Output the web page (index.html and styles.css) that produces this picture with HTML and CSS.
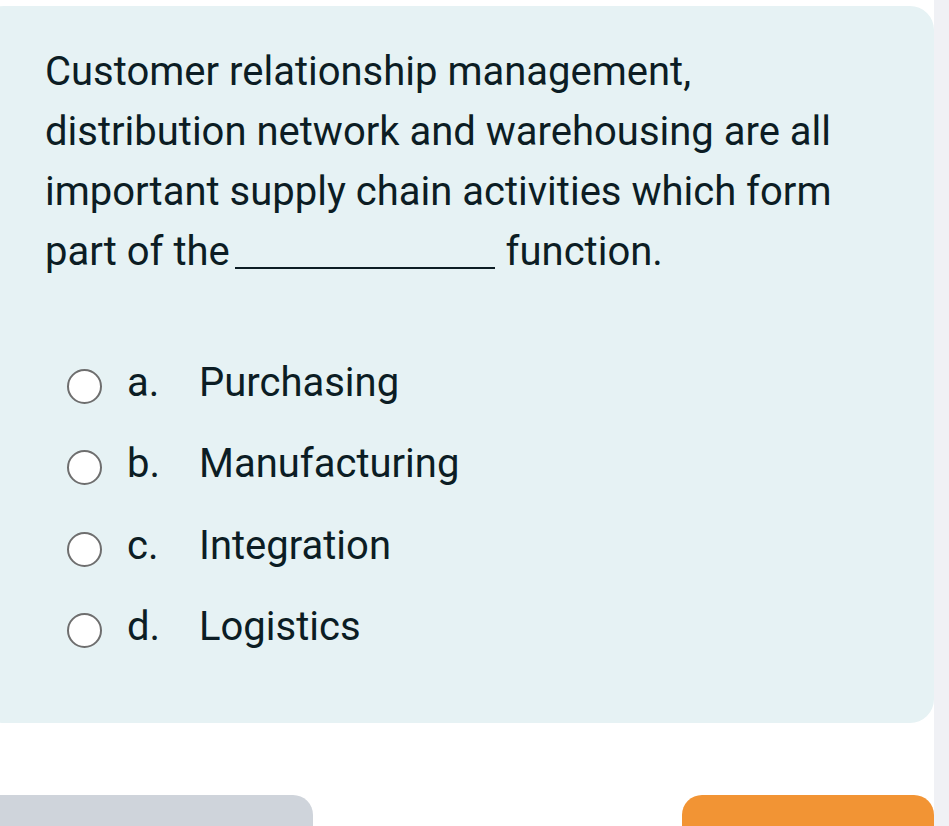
FILE: index.html
```html
<!DOCTYPE html>
<html>
<head>
<meta charset="utf-8">
<link rel="stylesheet" href="styles.css">
</head>
<body>
<div class="page">
  <main class="main">
    <section class="card">
      <p class="question">Customer relationship management, distribution network and warehousing are all important supply chain activities which form part of the <span class="blank"></span> function.</p>
      <ul class="options">
        <li class="option"><span class="radio"></span><span class="letter">a.</span><span class="label">Purchasing</span></li>
        <li class="option"><span class="radio"></span><span class="letter">b.</span><span class="label">Manufacturing</span></li>
        <li class="option"><span class="radio"></span><span class="letter">c.</span><span class="label">Integration</span></li>
        <li class="option"><span class="radio"></span><span class="letter">d.</span><span class="label">Logistics</span></li>
      </ul>
    </section>
    <div class="actions">
      <button class="btn btn-secondary"></button>
      <button class="btn btn-primary"></button>
    </div>
  </main>
  <div class="track"></div>
</div>
</body>
</html>
```
FILE: styles.css
```css
html, body {
  margin: 0;
  padding: 0;
  background: #ffffff;
  overflow: hidden;
}
body {
  font-family: Roboto, "Liberation Sans", sans-serif;
  color: #0c1d24;
}
.page {
  display: flex;
  height: 826px;
}
.main {
  width: 934px;
  flex: none;
  display: flex;
  flex-direction: column;
}
.track {
  flex: 1;
  background: #f0f1f5;
}
.card {
  flex: none;
  margin: 6px 0 0 -20px;
  width: 954px;
  height: 717px;
  box-sizing: border-box;
  background: #e6f2f4;
  border-radius: 24px;
  padding: 36px 40px 0 65px;
}
.question {
  margin: 0;
  font-size: 40px;
  line-height: 60px;
  width: 820px;
}
.blank {
  display: inline-block;
  width: 260px;
  height: 1px;
  border-bottom: 2.5px solid #0c1d24;
  margin: 0 1px -4px -5px;
}
.options {
  list-style: none;
  margin: 70px 0 0 22px;
  padding: 0;
  display: flex;
  flex-direction: column;
  gap: 21.5px;
}
.option {
  display: flex;
  align-items: center;
  height: 60px;
  font-size: 40px;
}
.radio {
  width: 31px;
  height: 31px;
  border: 2.5px solid #6e6e6e;
  border-radius: 50%;
  background: #ffffff;
  flex: none;
  margin-top: 8px;
}
.letter {
  margin-left: 25px;
  width: 72px;
}
.actions {
  flex: none;
  margin-top: 72px;
  display: flex;
  justify-content: space-between;
}
.btn {
  border: none;
  height: 60px;
  border-radius: 20px;
  padding: 0;
}
.btn-secondary {
  width: 333px;
  margin-left: -20px;
  background: #cfd4db;
}
.btn-primary {
  width: 252px;
  background: #f29434;
}
```
